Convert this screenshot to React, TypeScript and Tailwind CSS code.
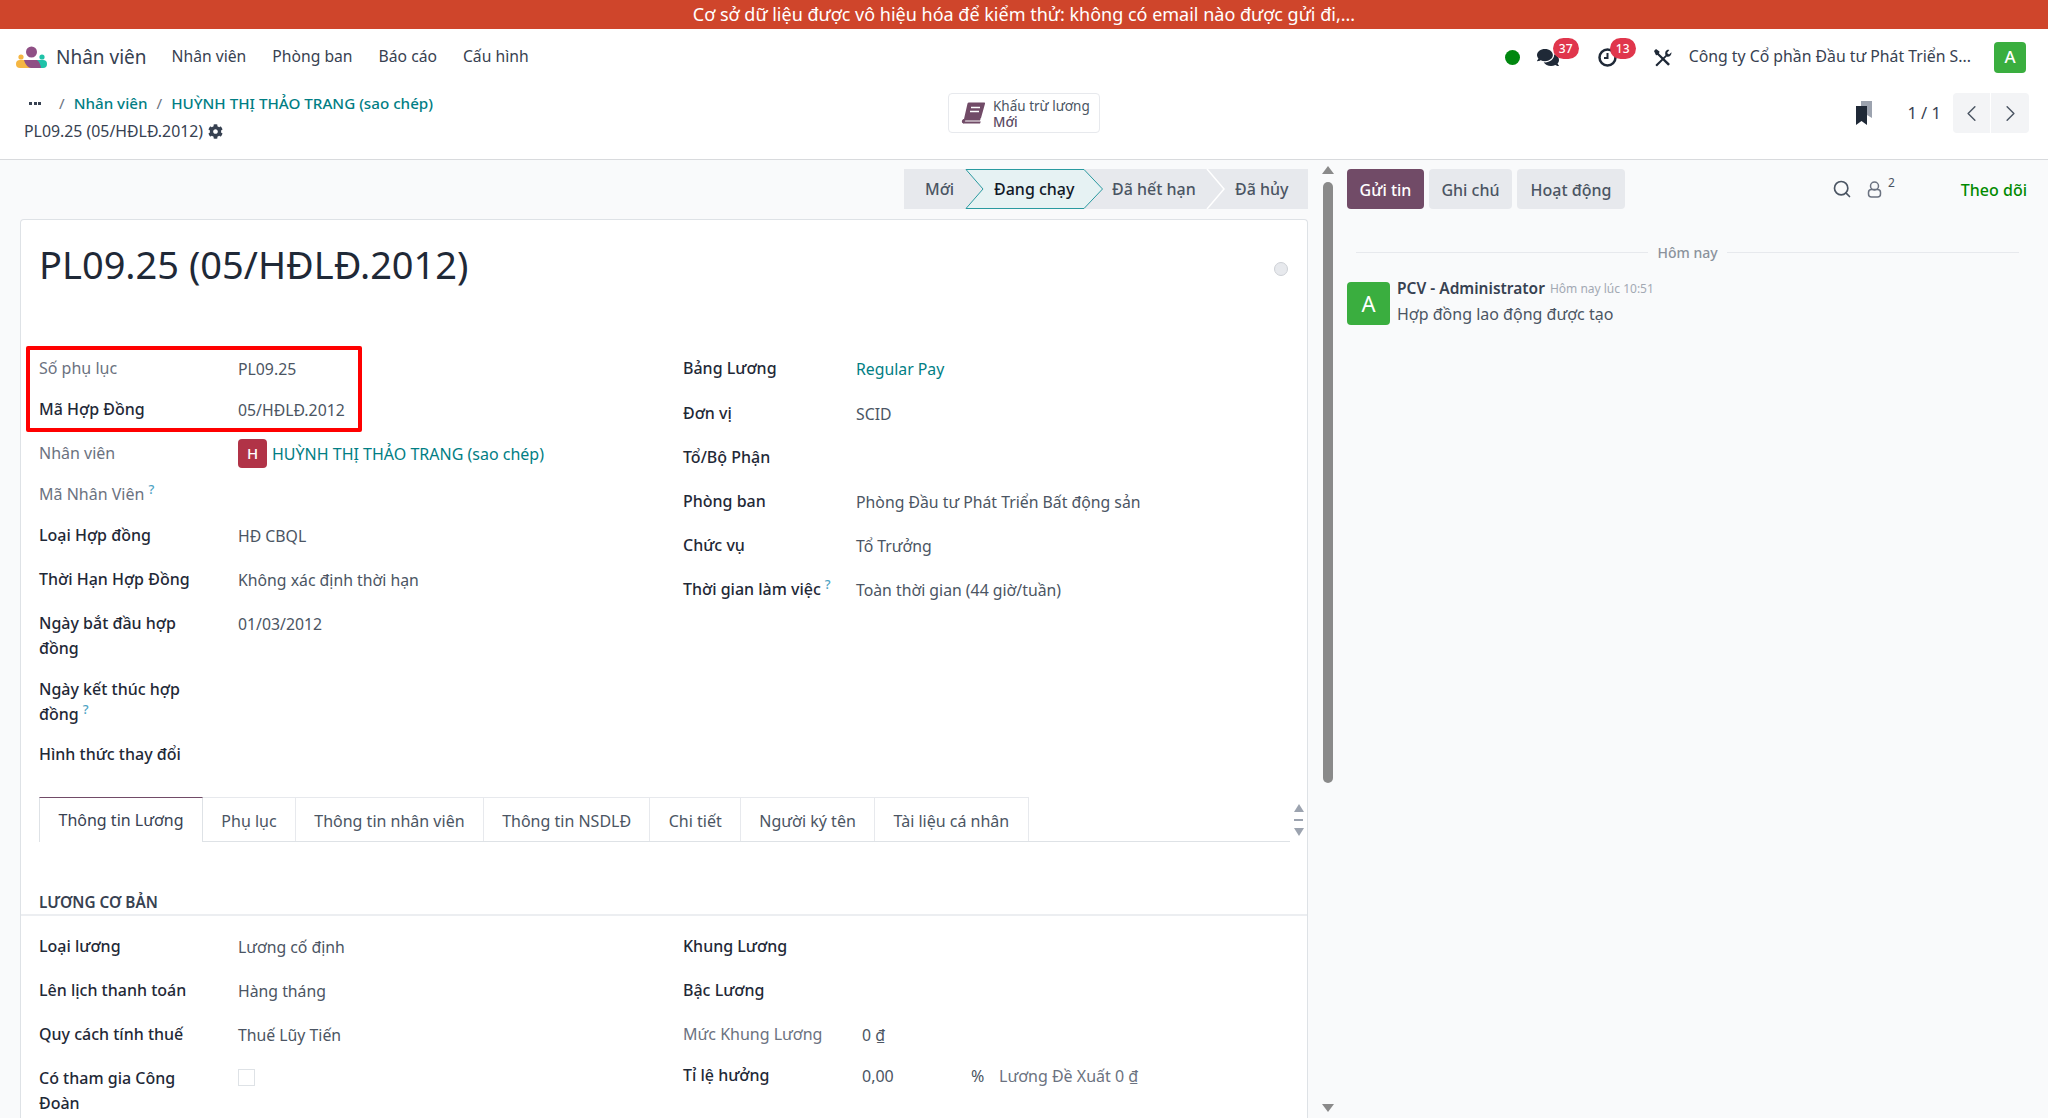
import { ReactNode } from "react";
import { FaCog, FaComments } from "react-icons/fa";
import { ChevronLeft, ChevronRight, Search } from "lucide-react";

function Logo() {
  return (
    <svg width="31" height="22" viewBox="0 0 31 22" className="shrink-0">
      <circle cx="5" cy="11" r="2.600" fill="#f5b642" />
      <circle cx="26" cy="11" r="2.600" fill="#1fc2a8" />
      <path d="M4 14h8l3 8H4a4 4 0 0 1 0-8z" fill="#f5b642" />
      <path d="M27 14h-8l-3 8h11a4 4 0 0 0 0-8z" fill="#1fc2a8" />
      <circle cx="15.500" cy="6" r="5.500" fill="#8f4f85" />
      <path d="M8 14h12c2 0 4 2.500 5 8H15c-3 0-6-4-7-8z" fill="#8f4f85" />
    </svg>
  );
}

function BookIcon() {
  return (
    <svg width="24" height="22" viewBox="0 0 24 22" className="shrink-0">
      <path d="M6.500 1.500A1.500 1.500 0 0 1 8 .5h15a1 1 0 0 1 1 1.300L20 16a1.500 1.500 0 0 1-1.500 1H3z" fill="#714b67" />
      <path d="M3 17c-2.500 0-2.500 4.500 0 4.500h16l.8-2H4.500c-1 0-1-1 .2-1H19l.5-1.500z" fill="#714b67" />
      <path d="M3 17L0.800 19c0 1 .7 2.500 2.200 2.500" fill="#714b67" />
      <path d="M10 5.500h9M9 9.500h9" stroke="#fff" strokeWidth="1.600" />
    </svg>
  );
}

function ToolsIcon() {
  return (
    <svg width="19" height="19" viewBox="0 0 19 19" className="shrink-0" fill="#1f2937">
      <path d="M1 3l2-2 3.500 2.500-.5 2 10.500 10c.8.800-1 2.700-1.800 1.800L4.500 7 3 7.200z" />
      <path d="M12.500 7.200L2.800 16.500c-.8.800 .8 2.300 1.600 1.500l9.300-9.500c2.500.8 5-1.300 4.800-4.300l-2.500 2.300-2-1.500L16.300 2c-3-.8-4.800 2-3.800 5.200z" />
    </svg>
  );
}

function Badge({ children, className }: { children: ReactNode; className: string }) {
  return (
    <span
      className={
        "absolute flex h-[21px] items-center justify-center rounded-full bg-[#e0364c] text-[12px] font-medium text-white " +
        className
      }
    >
      {children}
    </span>
  );
}

function Field({
  label,
  value,
  muted,
  rowClass,
  labelClass,
}: {
  label: ReactNode;
  value?: ReactNode;
  muted?: boolean;
  rowClass: string;
  labelClass: string;
}) {
  return (
    <div className={"flex items-start " + rowClass}>
      <div
        className={
          "shrink-0 leading-[25px] " +
          labelClass +
          (muted ? " text-[#6b7280]" : " font-medium text-[#1f2937]")
        }
      >
        {label}
      </div>
      {value && <div className="pt-[1px] text-[15.800px] leading-[25px] text-[#4b5563]">{value}</div>}
    </div>
  );
}

function Help() {
  return <sup className="ml-[4px] text-[13px] font-medium text-[#4ea3c4]">?</sup>;
}

const tabs = ["Phụ lục", "Thông tin nhân viên", "Thông tin NSDLĐ", "Chi tiết", "Người ký tên", "Tài liệu cá nhân"];

export default function App() {
  return (
    <div className="flex h-[1118px] w-[2048px] flex-col overflow-hidden bg-[#f9fafb] font-['Noto_Sans',sans-serif] text-[16px] text-[#374151]">
      <div className="flex h-[29px] shrink-0 items-center justify-center bg-[#cf452b] text-[18px] text-white">
        Cơ sở dữ liệu được vô hiệu hóa để kiểm thử: không có email nào được gửi đi,...
      </div>

      <div className="flex h-[56px] shrink-0 items-center bg-white pl-[16px] pr-[22px]">
        <Logo />
        <span className="ml-[9px] text-[19px] text-[#374151]">Nhân viên</span>
        <nav className="ml-[25px] flex gap-[26px] text-[15.700px] text-[#374151]">
          <span>Nhân viên</span>
          <span>Phòng ban</span>
          <span>Báo cáo</span>
          <span>Cấu hình</span>
        </nav>
        <div className="ml-auto flex items-center">
          <span className="h-[15px] w-[15px] rounded-full bg-[#00870f]" />
          <span className="relative ml-[17px] flex h-[24px] w-[40px] items-center">
            <FaComments className="h-[21px] w-[22px] text-[#1f2937]" />
            <Badge className="-top-[7px] left-[16px] w-[26px]">37</Badge>
          </span>
          <span className="relative ml-[21px] flex h-[24px] w-[38px] items-center">
            <svg width="19" height="19" viewBox="0 0 19 19" fill="none" stroke="#1f2937" strokeWidth="2.500">
              <circle cx="9.500" cy="9.500" r="8" />
              <path d="M9.500 5v5H6" strokeWidth="2" />
            </svg>
            <Badge className="-top-[7px] left-[12px] w-[26px]">13</Badge>
          </span>
          <span className="ml-[17px]">
            <ToolsIcon />
          </span>
          <span className="ml-[17px] text-[15.800px] text-[#374151]">Công ty Cổ phần Đầu tư Phát Triển S...</span>
          <span className="ml-[23px] flex h-[31px] w-[32px] items-center justify-center rounded-[4px] bg-[#3aae3f] text-[17px] font-medium text-white">
            A
          </span>
        </div>
      </div>

      <div className="flex h-[75px] shrink-0 border-b border-[#d8dadd] bg-white pl-[24px] pr-[19px] pt-[6px]">
        <div className="w-[924px] shrink-0">
          <div className="flex h-[24px] items-center text-[15.200px] font-medium text-[#017e84]">
            <span className="ml-[5px] flex gap-[1.500px]">
              <span className="h-[3px] w-[3px] bg-[#374151]" />
              <span className="h-[3px] w-[3px] bg-[#374151]" />
              <span className="h-[3px] w-[3px] bg-[#374151]" />
            </span>
            <span className="ml-[18px] font-normal text-[#6b7280]">/</span>
            <span className="ml-[9px]">Nhân viên</span>
            <span className="ml-[9px] font-normal text-[#6b7280]">/</span>
            <span className="ml-[9px]">HUỲNH THỊ THẢO TRANG (sao chép)</span>
          </div>
          <div className="mt-[4px] flex h-[25px] items-center text-[15.850px] text-[#374151]">
            PL09.25 (05/HĐLĐ.2012)
            <FaCog className="ml-[5px] h-[15px] w-[15px] text-[#374151]" />
          </div>
        </div>
        <div className="mt-[2px] flex h-[40px] w-[152px] shrink-0 items-center rounded-[4px] border border-[#e7e9ed] bg-white pl-[12px]">
          <BookIcon />
          <div className="ml-[8px] mt-[1px] text-[13.500px] leading-[16px] text-[#4b5563]">
            <div>Khấu trừ lương</div>
            <div className="font-medium text-[#5b4a63]">Mới</div>
          </div>
        </div>
        <div className="ml-auto mt-[2px] flex h-[40px] items-center">
          <svg width="16" height="24" viewBox="0 0 16 24">
            <path d="M5 0h11v17l-5-3-6 3z" fill="#9ca3af" />
            <path d="M0 5h11v19l-5.500-4L0 24z" fill="#1f2937" />
          </svg>
          <span className="ml-[35px] mt-[1px] text-[16.500px] text-[#374151]">1 / 1</span>
          <div className="ml-[12px] flex h-[40px] overflow-hidden rounded-[4px] bg-[#f3f4f6]">
            <span className="flex w-[38px] items-center justify-center border-r border-white">
              <ChevronLeft className="h-[27px] w-[27px] text-[#4b5563]" strokeWidth={1.300} />
            </span>
            <span className="flex w-[38px] items-center justify-center">
              <ChevronRight className="h-[27px] w-[27px] text-[#4b5563]" strokeWidth={1.300} />
            </span>
          </div>
        </div>
      </div>

      <div className="flex min-h-0 flex-1">
        <div className="flex w-[1318px] shrink-0 flex-col pl-[20px] pr-[10px] pt-[9px]">
          <div className="flex h-[40px] shrink-0 justify-end">
            <div className="relative flex w-[404px] items-center bg-[#e7e9ed] font-medium text-[#4b5563]">
              <span className="absolute left-[21px]">Mới</span>
              <svg className="absolute left-[61px] top-0 h-[40px] w-[139px]" viewBox="0 0 139 40">
                <path d="M1 .5h118L137.500 20 119 39.500H1L18 20z" fill="#e6f2f3" stroke="#2a9aa0" />
              </svg>
              <span className="absolute left-[90px] font-medium text-[#111827]">Đang chạy</span>
              <svg className="absolute left-[302px] top-0 h-[40px] w-[20px]" viewBox="0 0 20 40" fill="none">
                <path d="M1 0l17 20L1 40" stroke="#fff" strokeWidth="1.500" />
              </svg>
              <span className="absolute left-[208px]">Đã hết hạn</span>
              <span className="absolute left-[331px]">Đã hủy</span>
            </div>
          </div>
          <div className="mt-[10px] min-h-0 flex-1 overflow-hidden rounded-t-[4px] border border-b-0 border-[#dee2e6] bg-white">
            <div className="flex items-start justify-between pl-[18px] pr-[19px] pt-[16px]">
              <h1 className="text-[38px] leading-[56px] text-[#1f2937]">PL09.25 (05/HĐLĐ.2012)</h1>
              <span className="mt-[26px] h-[14px] w-[14px] rounded-full border border-[#ced1d6] bg-[#e7e9ed]" />
            </div>

            <div className="mt-[64px] flex h-[441px] pl-[18px]">
              <div className="relative w-[644px] shrink-0">
                <div className="absolute -left-[13px] -top-[10px] h-[86px] w-[336px] rounded-[2px] border-[4px] border-[#ff0000]" />
                <Field rowClass="h-[41px]" labelClass="w-[199px]" muted label="Số phụ lục" value="PL09.25" />
                <Field rowClass="h-[44px]" labelClass="w-[199px]" label="Mã Hợp Đồng" value="05/HĐLĐ.2012" />
                <div className="flex h-[41px] items-start">
                  <div className="w-[199px] shrink-0 leading-[25px] text-[#6b7280]">Nhân viên</div>
                  <div className="-mt-[2px] flex items-center">
                    <span className="flex h-[29px] w-[29px] items-center justify-center rounded-[4px] bg-[#b13347] text-[15px] font-medium text-white">
                      H
                    </span>
                    <span className="ml-[5px] text-[#017e84]">HUỲNH THỊ THẢO TRANG (sao chép)</span>
                  </div>
                </div>
                <Field rowClass="h-[41px]" labelClass="w-[199px]" muted label={<>Mã Nhân Viên<Help /></>} />
                <Field rowClass="h-[44px]" labelClass="w-[199px]" label="Loại Hợp đồng" value="HĐ CBQL" />
                <Field rowClass="h-[44px]" labelClass="w-[199px]" label="Thời Hạn Hợp Đồng" value="Không xác định thời hạn" />
                <Field rowClass="h-[66px]" labelClass="w-[199px] pr-[30px]" label="Ngày bắt đầu hợp đồng" value="01/03/2012" />
                <Field rowClass="h-[65px]" labelClass="w-[199px] pr-[30px]" label={<>Ngày kết thúc hợp đồng<Help /></>} />
                <Field rowClass="h-[40px]" labelClass="w-[199px]" label="Hình thức thay đổi" />
              </div>
              <div className="flex-1">
                <Field
                  rowClass="h-[45px]"
                  labelClass="w-[173px]"
                  label="Bảng Lương"
                  value={<span className="text-[#017e84]">Regular Pay</span>}
                />
                <Field rowClass="h-[44px]" labelClass="w-[173px]" label="Đơn vị" value="SCID" />
                <Field rowClass="h-[44px]" labelClass="w-[173px]" label="Tổ/Bộ Phận" />
                <Field rowClass="h-[44px]" labelClass="w-[173px]" label="Phòng ban" value="Phòng Đầu tư Phát Triển Bất động sản" />
                <Field rowClass="h-[44px]" labelClass="w-[173px]" label="Chức vụ" value="Tổ Trưởng" />
                <Field rowClass="h-[44px]" labelClass="w-[173px]" label={<>Thời gian làm việc<Help /></>} value="Toàn thời gian (44 giờ/tuần)" />
              </div>
            </div>

            <div className="flex h-[45px] items-stretch pl-[18px]">
              <div className="flex flex-1 border-b border-[#dee2e6]">
                <div className="-mb-px flex items-center border-x border-t border-[#dee2e6] border-t-[#714b67] bg-white px-[18.500px] text-[#374151]">
                  Thông tin Lương
                </div>
                {tabs.map((t) => (
                  <div key={t} className="flex items-center border-r border-t border-[#e7e9ed] px-[18.300px] pt-[2px] text-[#4b5563]">
                    {t}
                  </div>
                ))}
              </div>
              <div className="flex w-[17px] flex-col items-center justify-center gap-[7px] text-[#9ca3af]">
                <span className="h-0 w-0 border-x-[5px] border-b-[8px] border-x-transparent border-b-[#9ca3af]" />
                <span className="h-[2px] w-[9px] bg-[#9ca3af]" />
                <span className="h-0 w-0 border-x-[5px] border-t-[8px] border-x-transparent border-t-[#9ca3af]" />
              </div>
            </div>

            <div className="mt-[48px] h-[26px] border-b-2 border-[#eceef1] pl-[18px] text-[15.300px] font-semibold uppercase leading-[25px] text-[#374151]">
              Lương cơ bản
            </div>

            <div className="mt-[18px] flex pl-[18px]">
              <div className="w-[644px] shrink-0">
                <Field rowClass="h-[44px]" labelClass="w-[199px]" label="Loại lương" value="Lương cố định" />
                <Field rowClass="h-[44px]" labelClass="w-[199px]" label="Lên lịch thanh toán" value="Hàng tháng" />
                <Field rowClass="h-[44px]" labelClass="w-[199px]" label="Quy cách tính thuế" value="Thuế Lũy Tiến" />
                <div className="flex items-start">
                  <div className="w-[199px] shrink-0 pr-[30px] font-medium leading-[25px] text-[#1f2937]">Có tham gia Công Đoàn</div>
                  <span className="mt-[3px] h-[17px] w-[17px] border border-[#dee2e6] bg-white" />
                </div>
              </div>
              <div className="flex-1">
                <Field rowClass="h-[44px]" labelClass="w-[179px]" label="Khung Lương" />
                <Field rowClass="h-[44px]" labelClass="w-[179px]" label="Bậc Lương" />
                <Field rowClass="h-[41px]" labelClass="w-[179px]" muted label="Mức Khung Lương" value="0 ₫" />
                <div className="flex items-start">
                  <div className="w-[179px] shrink-0 font-medium leading-[25px] text-[#1f2937]">Tỉ lệ hưởng</div>
                  <div className="w-[109px] pt-[1px] leading-[25px] text-[#4b5563]">0,00</div>
                  <div className="w-[28px] pt-[1px] leading-[25px] text-[#4b5563]">%</div>
                  <div className="pt-[1px] leading-[25px] text-[#6b7280]">Lương Đề Xuất 0 ₫</div>
                </div>
              </div>
            </div>
          </div>
        </div>

        <div className="flex w-[20px] shrink-0 flex-col items-center pb-[6px] pt-[6px]">
          <span className="h-0 w-0 border-x-[6px] border-b-[8px] border-x-transparent border-b-[#8a8a8a]" />
          <span className="mt-[8px] h-[601px] w-[10px] rounded-full bg-[#8a8a8a]" />
          <span className="mt-auto h-0 w-0 border-x-[6px] border-t-[8px] border-x-transparent border-t-[#8a8a8a]" />
        </div>

        <div className="flex-1 pl-[9px] pr-[21px] pt-[9px]">
          <div className="flex h-[40px] items-center">
            <span className="flex h-[40px] w-[77px] items-center justify-center rounded-[4px] bg-[#714b67] pt-[1px] font-medium text-white">
              Gửi tin
            </span>
            <span className="ml-[5px] flex h-[40px] w-[83px] items-center justify-center rounded-[4px] bg-[#e7e9ed] pt-[1px] font-medium text-[#4b5563]">
              Ghi chú
            </span>
            <span className="ml-[5px] flex h-[40px] w-[108px] items-center justify-center rounded-[4px] bg-[#e7e9ed] pt-[1px] font-medium text-[#4b5563]">
              Hoạt động
            </span>
            <Search className="ml-[207px] h-[20px] w-[20px] text-[#4b5563]" strokeWidth={2} />
            <span className="relative ml-[15px] flex h-[24px] items-center">
              <svg width="15" height="17" viewBox="0 0 15 17" fill="none" stroke="#6b7280" strokeWidth="1.500">
                <circle cx="7.500" cy="5" r="4" />
                <rect x="1.500" y="8.500" width="12" height="7.500" rx="3" />
              </svg>
              <sup className="absolute top-[6px] left-[21px] text-[12px] text-[#4b5563]">2</sup>
            </span>
            <span className="ml-auto pt-[1px] font-medium text-[#008a00]">Theo dõi</span>
          </div>

          <div className="mt-[33px] flex items-center pl-[9px] pr-[8px]">
            <span className="h-px flex-1 bg-[#e7e9ed]" />
            <span className="mx-[9px] text-[14px] font-medium text-[#8b929c]">Hôm nay</span>
            <span className="h-px flex-1 bg-[#e7e9ed]" />
          </div>

          <div className="mt-[19px] flex">
            <span className="flex h-[43px] w-[43px] shrink-0 items-center justify-center rounded-[4px] bg-[#3aae3f] text-[22px] text-white">
              A
            </span>
            <div className="ml-[7px] -mt-[3px]">
              <div className="flex h-[20px] items-center">
                <span className="text-[15.500px] font-semibold text-[#374151]">PCV - Administrator</span>
                <span className="ml-[5px] text-[12px] text-[#a3a9b3]">Hôm nay lúc 10:51</span>
              </div>
              <div className="mt-[3px] leading-[25px] text-[#4b5563]">Hợp đồng lao động được tạo</div>
            </div>
          </div>
        </div>
      </div>
    </div>
  );
}
